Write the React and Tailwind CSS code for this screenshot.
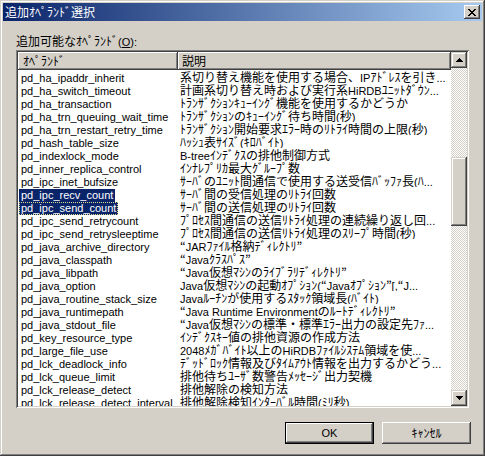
import React from "react"

const rows = [
  ["pd_ha_ipaddr_inherit", "系切り替え機能を使用する場合、IPｱﾄﾞﾚｽを引き..."],
  ["pd_ha_switch_timeout", "計画系切り替え時および実行系HiRDBﾕﾆｯﾄﾀﾞｳﾝ..."],
  ["pd_ha_transaction", "ﾄﾗﾝｻﾞｸｼｮﾝｷｭｰｲﾝｸﾞ機能を使用するかどうか"],
  ["pd_ha_trn_queuing_wait_time", "ﾄﾗﾝｻﾞｸｼｮﾝのｷｭｰｲﾝｸﾞ待ち時間(秒)"],
  ["pd_ha_trn_restart_retry_time", "ﾄﾗﾝｻﾞｸｼｮﾝ開始要求ｴﾗｰ時のﾘﾄﾗｲ時間の上限(秒)"],
  ["pd_hash_table_size", "ﾊｯｼｭ表ｻｲｽﾞ(ｷﾛﾊﾞｲﾄ)"],
  ["pd_indexlock_mode", "B-treeｲﾝﾃﾞｸｽの排他制御方式"],
  ["pd_inner_replica_control", "ｲﾝﾅﾚﾌﾟﾘｶ最大ｸﾞﾙｰﾌﾟ数"],
  ["pd_ipc_inet_bufsize", "ｻｰﾊﾞのﾕﾆｯﾄ間通信で使用する送受信ﾊﾞｯﾌｧ長(ﾊ..."],
  ["pd_ipc_recv_count", "ｻｰﾊﾞ間の受信処理のﾘﾄﾗｲ回数", "selected"],
  ["pd_ipc_send_count", "ｻｰﾊﾞ間の送信処理のﾘﾄﾗｲ回数", "focused"],
  ["pd_ipc_send_retrycount", "ﾌﾟﾛｾｽ間通信の送信ﾘﾄﾗｲ処理の連続繰り返し回..."],
  ["pd_ipc_send_retrysleeptime", "ﾌﾟﾛｾｽ間通信の送信ﾘﾄﾗｲ処理のｽﾘｰﾌﾟ時間(秒)"],
  ["pd_java_archive_directory", "“JARﾌｧｲﾙ格納ﾃﾞｨﾚｸﾄﾘ”"],
  ["pd_java_classpath", "“Javaｸﾗｽﾊﾟｽ”"],
  ["pd_java_libpath", "“Java仮想ﾏｼﾝのﾗｲﾌﾞﾗﾘﾃﾞｨﾚｸﾄﾘ”"],
  ["pd_java_option", "Java仮想ﾏｼﾝの起動ｵﾌﾟｼｮﾝ(“Javaｵﾌﾟｼｮﾝ”[,“J..."],
  ["pd_java_routine_stack_size", "Javaﾙｰﾁﾝが使用するｽﾀｯｸ領域長(ﾊﾞｲﾄ)"],
  ["pd_java_runtimepath", "“Java Runtime Environmentのﾙｰﾄﾃﾞｨﾚｸﾄﾘ”"],
  ["pd_java_stdout_file", "“Java仮想ﾏｼﾝの標準・標準ｴﾗｰ出力の設定先ﾌｧ..."],
  ["pd_key_resource_type", "ｲﾝﾃﾞｸｽｷｰ値の排他資源の作成方法"],
  ["pd_large_file_use", "2048ﾒｶﾞﾊﾞｲﾄ以上のHiRDBﾌｧｲﾙｼｽﾃﾑ領域を使..."],
  ["pd_lck_deadlock_info", "ﾃﾞｯﾄﾞﾛｯｸ情報及びﾀｲﾑｱｳﾄ情報を出力するかどう..."],
  ["pd_lck_queue_limit", "排他待ちﾕｰｻﾞ数警告ﾒｯｾｰｼﾞ出力契機"],
  ["pd_lck_release_detect", "排他解除の検知方法"],
  ["pd_lck_release_detect_interval", "排他解除検知ｲﾝﾀｰﾊﾞﾙ時間(ﾐﾘ秒)"],
]

// classic win2k bevels
const raised = "shadow-[inset_-1px_-1px_#404040,inset_1px_1px_#d4d0c8,inset_-2px_-2px_#808080,inset_2px_2px_#ffffff]"
const button = "shadow-[inset_-1px_-1px_#404040,inset_1px_1px_#ffffff,inset_-2px_-2px_#808080,inset_2px_2px_#d4d0c8]"
const sunken = "shadow-[inset_1px_1px_#808080,inset_-1px_-1px_#ffffff,inset_2px_2px_#404040,inset_-2px_-2px_#d4d0c8]"
const header = "shadow-[inset_-1px_-1px_#404040,inset_1px_1px_#ffffff,inset_-2px_-2px_#808080]"

// ascii runs use the narrow latin face, the rest goes to the CJK face
function Mixed({ text }) {
  return text.split(/([ -~]+)/).map((part, i) =>
    /^[ -~]+$/.test(part)
      ? <span key={i} className="font-['Liberation_Sans',sans-serif] text-[11px]">{part}</span>
      : <span key={i} className="font-['Noto_Sans_CJK_JP',sans-serif] text-[12px]">{part}</span>
  )
}

function Arrow({ up }) {
  return (
    <svg width="7" height="4" viewBox="0 0 7 4" className="block">
      {up
        ? <path d="M3 0h1v1h1v1h1v1h1v1H0V3h1V2h1V1h1z" fill="#000" />
        : <path d="M0 0h7v1H6v1H5v1H4v1H3V3H2V2H1V1H0z" fill="#000" />}
    </svg>
  )
}

export default function App() {
  return (
    <div className={`w-[485px] h-[456px] bg-[#d4d0c8] p-[3px] flex flex-col text-black select-none font-['Liberation_Sans','Noto_Sans_CJK_JP',sans-serif] ${raised}`}>

      {/* Title bar */}
      <div className="h-[18px] flex items-center justify-between pl-[2px] pr-[2px] bg-[linear-gradient(to_right,#0a246a,#a6caf0)]">
        <span className="text-white text-[12px] leading-[18px] font-['Noto_Sans_CJK_JP',sans-serif]">追加ｵﾍﾟﾗﾝﾄﾞ選択</span>
        <div className={`w-[16px] h-[14px] bg-[#d4d0c8] flex items-center justify-center ${button}`}>
          <svg width="8" height="7" viewBox="0 0 8 7" className="block">
            <path d="M0 0h2v1h1v1h2V1h1V0h2v1H7v1H6v1H5v1h1v1h1v1h1v1H6V6H5V5H3v1H2v1H0V6h1V5h1V4h1V3H2V2H1V1H0z" fill="#000" />
          </svg>
        </div>
      </div>

      <div className="flex-1 flex flex-col px-[13px]">
        {/* Label */}
        <div className="mt-[13px] leading-[13px] h-[13px]">
          <span className="font-['Noto_Sans_CJK_JP',sans-serif] text-[12px]">追加可能なｵﾍﾟﾗﾝﾄﾞ</span>
          <span className="font-['Liberation_Sans',sans-serif] text-[11px]">(<u>O</u>):</span>
        </div>

        {/* List view */}
        <div className={`mt-[3px] h-[358px] bg-white p-[2px] flex ${sunken}`}>
          <div className="flex-1 min-w-0 flex flex-col">
            <div className="h-[18px] flex shrink-0">
              <div className={`w-[160px] bg-[#d4d0c8] pl-[5px] leading-[17px] text-[12px] font-['Noto_Sans_CJK_JP',sans-serif] ${header}`}>ｵﾍﾟﾗﾝﾄﾞ</div>
              <div className={`flex-1 bg-[#d4d0c8] pl-[4px] leading-[17px] text-[12px] font-['Noto_Sans_CJK_JP',sans-serif] ${header}`}>説明</div>
            </div>
            <div className="flex-1 overflow-hidden">
              {rows.map(([name, desc, state], i) => (
                <div key={i} className="h-[13px] leading-[13px] flex whitespace-nowrap">
                  <div className="w-[160px] shrink-0 pl-[1px]">
                    <span className={`inline-block h-[13px] px-[2px] text-[11px] font-['Liberation_Sans',sans-serif] ${state ? "bg-[#0a246a] text-white" : ""} ${state === "focused" ? "outline-1 outline-dotted outline-[#d8d890] -outline-offset-1" : ""}`}>{name}</span>
                  </div>
                  <div className="flex-1 min-w-0 pl-[2px] overflow-hidden">
                    <Mixed text={desc} />
                  </div>
                </div>
              ))}
            </div>
          </div>

          {/* Scrollbar */}
          <div className="w-[16px] flex flex-col shrink-0">
            <div className={`h-[16px] bg-[#d4d0c8] flex items-center justify-center ${raised}`}><Arrow up /></div>
            <div className="flex-1 flex flex-col bg-[repeating-conic-gradient(#d4d0c8_0_25%,#ffffff_0_50%)] bg-[length:2px_2px]">
              <div className="h-[89px]" />
              <div className={`h-[69px] bg-[#d4d0c8] ${raised}`} />
            </div>
            <div className={`h-[16px] bg-[#d4d0c8] flex items-center justify-center ${raised}`}><Arrow /></div>
          </div>
        </div>

        {/* Buttons */}
        <div className="mt-[14px] -mr-[2px] flex justify-end gap-[8px]">
          <div className="w-[89px] h-[22px] border border-black bg-[#d4d0c8]">
            <div className={`h-full flex items-center justify-center text-[11px] font-['Liberation_Sans',sans-serif] ${button}`}>OK</div>
          </div>
          <div className={`w-[89px] h-[22px] bg-[#d4d0c8] flex items-center justify-center text-[12px] font-['Noto_Sans_CJK_JP',sans-serif] ${button}`}>ｷｬﾝｾﾙ</div>
        </div>
      </div>
    </div>
  )
}
